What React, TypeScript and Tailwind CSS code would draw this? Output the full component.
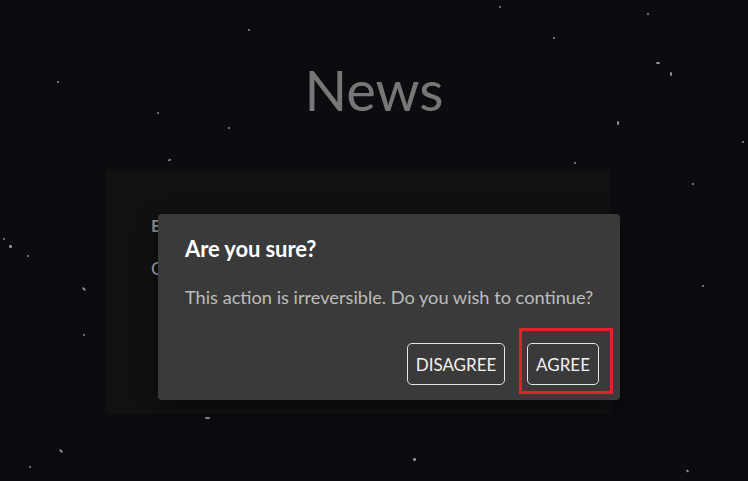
import React from 'react';

// background specks, positioned on the canvas
const stars = [
  'left-[248px] top-[29px] w-[2px] h-[2px]',
  'left-[57px] top-[81px] w-[2px] h-[2px]',
  'left-[157px] top-[112px] w-[2px] h-[2px]',
  'left-[228px] top-[127px] w-[2px] h-[2px]',
  'left-[168px] top-[159px] w-[3px] h-[2px] rotate-[-30deg]',
  'left-[3px] top-[238px] w-[2px] h-[2px]',
  'left-[9px] top-[245px] w-[3px] h-[3px]',
  'left-[499px] top-[6px] w-[2px] h-[2px]',
  'left-[647px] top-[13px] w-[2px] h-[2px]',
  'left-[553px] top-[37px] w-[2px] h-[2px]',
  'left-[656px] top-[62px] w-[4px] h-[2px]',
  'left-[670px] top-[72px] w-[2px] h-[4px]',
  'left-[617px] top-[121px] w-[2px] h-[4px]',
  'left-[742px] top-[141px] w-[2px] h-[2px]',
  'left-[574px] top-[162px] w-[2px] h-[2px]',
  'left-[692px] top-[183px] w-[2px] h-[2px]',
  'left-[27px] top-[255px] w-[2px] h-[2px]',
  'left-[82px] top-[288px] w-[4px] h-[2px] rotate-45',
  'left-[83px] top-[334px] w-[2px] h-[2px]',
  'left-[59px] top-[450px] w-[4px] h-[2px] rotate-45',
  'left-[29px] top-[466px] w-[2px] h-[2px]',
  'left-[205px] top-[417px] w-[5px] h-[2px]',
  'left-[702px] top-[285px] w-[2px] h-[2px]',
  'left-[686px] top-[470px] w-[3px] h-[2px] rotate-45',
  'left-[413px] top-[458px] w-[3px] h-[3px]',
];

const App: React.FC = () => {
  return (
    <div className="relative h-[481px] w-full overflow-hidden bg-[#0b0c10] font-['Lato','Open_Sans',sans-serif]">
      {stars.map((cls, i) => (
        <span key={i} className={`absolute rounded-[1px] bg-[#8e8f93] ${cls}`} />
      ))}

      <div className="flex flex-col">
        <h1 className="pt-[56px] text-center text-[56px] font-normal leading-[1.2] text-[#777777]">
          News
        </h1>

        {/* News card (behind the dialog) */}
        <div className="ml-[105px] mt-[46px] h-[245px] w-[506px] rounded-[4px] bg-[#111112] pl-[46px] pt-[45px]">
          <h2 className="text-[17px] font-bold leading-[24px] text-[#929292]">E</h2>
          <p className="mt-[18px] text-[18px] leading-[24px] text-[#a9adb3]">C</p>
        </div>
      </div>

      {/* Confirm dialog */}
      <div className="absolute left-[158px] top-[214px] flex h-[186px] w-[462px] flex-col rounded-[4px] bg-[#3a3a3a] px-[27px] pt-[22px] shadow-[0_8px_24px_rgba(0,0,0,0.45)]">
        <h3 className="text-[22px] font-bold leading-[26px] tracking-[-0.1px] text-white">Are you sure?</h3>
        <p className="mt-[23px] whitespace-nowrap text-[18.2px] leading-[24px] text-[#bdbdbd]">
          This action is irreversible. Do you wish to continue?
        </p>
        <div className="mr-[-6px] mt-[34px] flex justify-end gap-[22px]">
          <button className="flex h-[42px] w-[98px] items-center justify-center rounded-[5px] border border-[#e6e6e6] pt-[2px] text-[17px] text-[#f2f2f2]">
            DISAGREE
          </button>
          <button className="flex h-[42px] w-[72px] items-center justify-center rounded-[5px] border border-[#e6e6e6] pt-[2px] text-[17px] text-[#f2f2f2]">
            AGREE
          </button>
        </div>

        {/* highlight marker */}
        <div className="pointer-events-none absolute left-[361px] top-[114px] h-[66px] w-[94px] border-[3px] border-[#e5202b]" />
      </div>
    </div>
  );
};

export default App;
